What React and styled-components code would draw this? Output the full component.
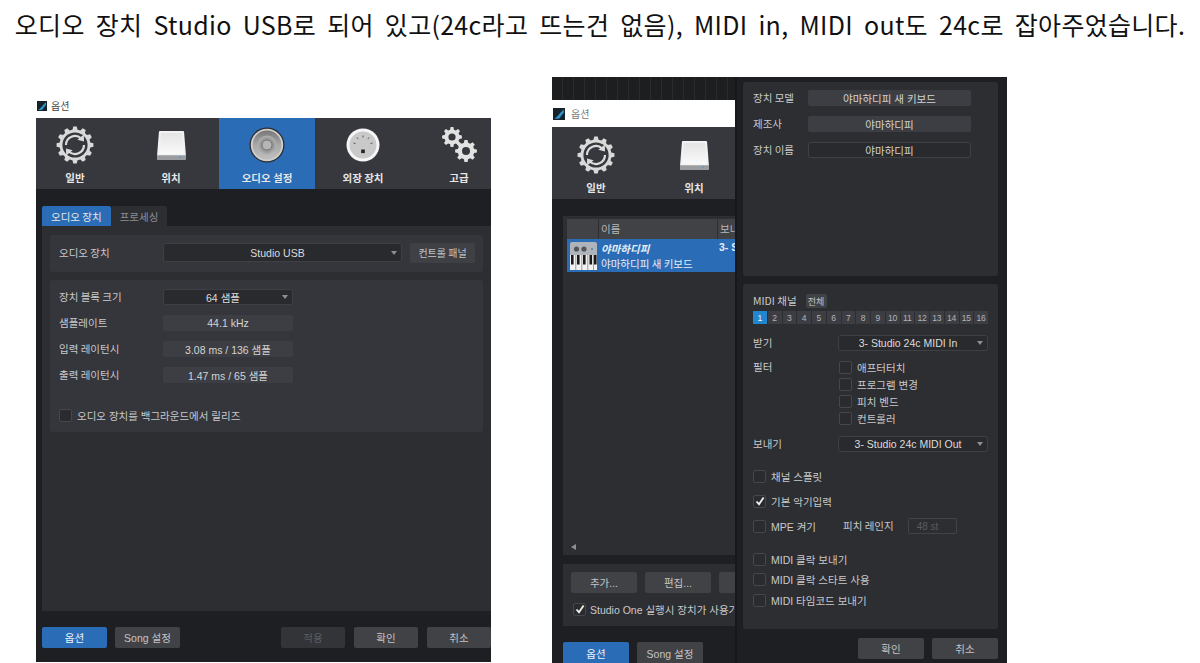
import React from 'react';
import styled, { createGlobalStyle } from 'styled-components';

const FONT = `"Noto Sans CJK KR", "Liberation Sans", sans-serif`;
const UI_FONT = `"Liberation Sans", "Noto Sans CJK KR", sans-serif`;

const GlobalStyle = createGlobalStyle`
    html, body {
        margin: 0;
        padding: 0;
        background: #fff;
        overflow: hidden;
    }
    * {
        box-sizing: border-box;
    }
`;

// makes a cog outline, used by the nav icons
const gearPath = (cx, cy, outer, inner, teeth) => {
    const step = (Math.PI * 2) / teeth;
    let d = '';
    for (let i = 0; i < teeth; i++) {
        const a = i * step - Math.PI / 2;
        const pts = [
            [inner, a - step * 0.32],
            [outer, a - step * 0.18],
            [outer, a + step * 0.18],
            [inner, a + step * 0.32],
        ];
        pts.forEach(([r, t], j) => {
            const x = (cx + r * Math.cos(t)).toFixed(2);
            const y = (cy + r * Math.sin(t)).toFixed(2);
            d += `${i === 0 && j === 0 ? 'M' : 'L'}${x} ${y} `;
        });
    }
    return d + 'Z';
};

const GeneralIcon = () => (
    <svg width="38" height="38" viewBox="0 0 38 38">
        <path d={gearPath(19, 19, 18.5, 15.5, 12)} fill="#d9d9d9" />
        <circle cx="19" cy="19" r="12.6" fill="#36383d" />
        <path d="M10 19a9 9 0 0 1 15.2-6.5" fill="none" stroke="#dcdcdc" strokeWidth="2.2" />
        <path d="M28 19a9 9 0 0 1-15.2 6.5" fill="none" stroke="#dcdcdc" strokeWidth="2.2" />
        <path d="M27.8 8.6l.2 7-6.6-1.8z" fill="#dcdcdc" />
        <path d="M10.2 29.4l-.2-7 6.6 1.8z" fill="#dcdcdc" />
    </svg>
);

const DriveIcon = () => (
    <svg width="29" height="31" viewBox="0 0 30 32">
        <defs>
            <linearGradient id="driveTop" x1="0" y1="0" x2="0" y2="1">
                <stop offset="0" stopColor="#e4e4e4" />
                <stop offset="1" stopColor="#fafafa" />
            </linearGradient>
        </defs>
        <path d="M3 1h24a1 1 0 0 1 1 1l2 25v2a2 2 0 0 1-2 2H2a2 2 0 0 1-2-2v-2L2 2a1 1 0 0 1 1-1z" fill="#f2f2f2" />
        <path d="M4 3h22l1.5 22H2.5z" fill="url(#driveTop)" />
        <path d="M0 26h30v3a2 2 0 0 1-2 2H2a2 2 0 0 1-2-2z" fill="#9a9ca0" />
        <circle cx="24" cy="28" r="0.9" fill="#4f9bd6" />
    </svg>
);

const SpeakerIcon = () => (
    <svg width="36" height="36" viewBox="0 0 36 36">
        <defs>
            <linearGradient id="cone" x1="0" y1="0" x2="0" y2="1">
                <stop offset="0" stopColor="#787878" />
                <stop offset="0.5" stopColor="#a8a8a8" />
                <stop offset="1" stopColor="#c0c0c0" />
            </linearGradient>
            <radialGradient id="capRing" cx="0.5" cy="0.5" r="0.5">
                <stop offset="0.55" stopColor="#8f8f8f" />
                <stop offset="1" stopColor="#b2b2b2" />
            </radialGradient>
        </defs>
        <circle cx="18" cy="18" r="17.5" fill="#2b2c2e" />
        <circle cx="18" cy="18" r="16.2" fill="#cfcfcf" />
        <circle cx="18" cy="18" r="14.4" fill="url(#cone)" />
        <circle cx="18" cy="18" r="9.5" fill="url(#capRing)" />
        <circle cx="18" cy="18" r="5" fill="#b6b6b6" stroke="#777" strokeWidth="1" />
    </svg>
);

const DialIcon = () => (
    <svg width="34" height="34" viewBox="0 0 34 34">
        <circle cx="17" cy="17" r="16.5" fill="#f6f6f6" />
        <circle cx="17" cy="17" r="13.5" fill="#c9c9c9" />
        <g stroke="#555" strokeWidth="1">
            <path d="M7.5 15l2 .6" />
            <path d="M11 9.5l1.2 1.6" />
            <path d="M17 7.5v2" />
            <path d="M23 9.5l-1.2 1.6" />
            <path d="M26.5 15l-2 .6" />
        </g>
        <rect x="15.2" y="21.5" width="3.6" height="3.6" fill="#222" />
    </svg>
);

const AdvancedIcon = () => (
    <svg width="36" height="36" viewBox="0 0 36 36">
        <path d={gearPath(11, 10, 10, 7.6, 8)} fill="#e2e2e2" />
        <circle cx="11" cy="10" r="3.6" fill="#36383d" />
        <path d={gearPath(25, 24, 11, 8.4, 8)} fill="#e2e2e2" />
        <circle cx="25" cy="24" r="4" fill="#36383d" />
    </svg>
);

const KeyboardIcon = () => (
    <svg width="27" height="28" viewBox="0 0 27 28" style={{ flexShrink: 0 }}>
        <rect width="27" height="28" rx="2" fill="#aeb4ba" />
        <circle cx="6.5" cy="7" r="2.6" fill="#555" />
        <circle cx="14" cy="7" r="2.6" fill="#555" />
        <circle cx="22" cy="7" r="1" fill="#4c7fb0" />
        <rect y="13" width="27" height="15" fill="#f2f2f2" />
        {[1, 7, 13, 19.5, 24].map(x => (
            <rect key={x} x={x} y="13" width="2.6" height="9.5" fill="#1a1a1a" />
        ))}
        {[5.5, 11.5, 17.5, 23].map(x => (
            <rect key={x} x={x} y="13" width="0.7" height="15" fill="#777" />
        ))}
    </svg>
);

const LogoIcon = ({ size = 10 }) => (
    <svg width={size} height={size} viewBox="0 0 10 10" style={{ flexShrink: 0 }}>
        <rect width="10" height="10" fill="#15222c" />
        <path d="M1 9C3 8 5 5 9 1v3C7 6 6 8 5 9z" fill="#2f93c4" />
    </svg>
);

const CheckMark = () => (
    <svg width="10" height="10" viewBox="0 0 10 10">
        <path d="M1.5 5.5L4 8.2 8.6 1.6" fill="none" stroke="#f0f0f0" strokeWidth="1.8" />
    </svg>
);

const NAV_ITEMS = [
    { label: '일반', Icon: GeneralIcon },
    { label: '위치', Icon: DriveIcon },
    { label: '오디오 설정', Icon: SpeakerIcon, active: true },
    { label: '외장 장치', Icon: DialIcon },
    { label: '고급', Icon: AdvancedIcon },
];

const CHANNELS = Array.from({ length: 16 }, (_, i) => i + 1);

const NavBar = ({ items, itemWidth, offset, height, iconTop }) => (
    <Nav $offset={offset} $height={height}>
        {items.map(({ label, Icon, active }) => (
            <NavItem key={label} $width={itemWidth} $active={active} $top={iconTop}>
                <NavIcon>
                    <Icon />
                </NavIcon>
                <NavLabel>{label}</NavLabel>
            </NavItem>
        ))}
    </Nav>
);

const Check = ({ checked, children }) => (
    <CheckRow>
        <Box>{checked && <CheckMark />}</Box>
        {children && <span>{children}</span>}
    </CheckRow>
);

const App = () => {
    return (
        <Page>
            <GlobalStyle />
            <Caption>오디오 장치 Studio USB로 되어 있고(24c라고 뜨는건 없음), MIDI in, MIDI out도 24c로 잡아주었습니다.</Caption>
            <Shots>
                <LeftWindow>
                    <TitleBar $height={21} $drop={4} $gap={4}>
                        <LogoIcon />
                        <span>옵션</span>
                    </TitleBar>
                    <NavBar items={NAV_ITEMS} itemWidth={96} offset={-9} height={71} iconTop={8} />
                    <Body>
                        <Tabs>
                            <Tab $active>오디오 장치</Tab>
                            <Tab>프로세싱</Tab>
                        </Tabs>
                        <AudioPanel>
                            <DevicePanel>
                                <FormLabel>오디오 장치</FormLabel>
                                <Select $width={239} $height={19}>Studio USB</Select>
                                <PanelButton>컨트롤 패널</PanelButton>
                            </DevicePanel>
                            <SettingsPanel>
                                <SettingRow>
                                    <FormLabel>장치 블록 크기</FormLabel>
                                    <Select $width={130} $height={16}>64 샘플</Select>
                                </SettingRow>
                                <SettingRow>
                                    <FormLabel>샘플레이트</FormLabel>
                                    <ReadOnly $width={130}>44.1 kHz</ReadOnly>
                                </SettingRow>
                                <SettingRow>
                                    <FormLabel>입력 레이턴시</FormLabel>
                                    <ReadOnly $width={130}>3.08 ms / 136 샘플</ReadOnly>
                                </SettingRow>
                                <SettingRow>
                                    <FormLabel>출력 레이턴시</FormLabel>
                                    <ReadOnly $width={130}>1.47 ms / 65 샘플</ReadOnly>
                                </SettingRow>
                                <ReleaseRow>
                                    <Check>오디오 장치를 백그라운드에서 릴리즈</Check>
                                </ReleaseRow>
                            </SettingsPanel>
                        </AudioPanel>
                    </Body>
                    <Footer>
                        <FooterGroup>
                            <Button $primary>옵션</Button>
                            <Button>Song 설정</Button>
                        </FooterGroup>
                        <FooterGroup $gap={9}>
                            <Button $disabled $width={64}>적용</Button>
                            <Button $width={64}>확인</Button>
                            <Button $width={64}>취소</Button>
                        </FooterGroup>
                    </Footer>
                </LeftWindow>

                <RightShot>
                    <BaseWindow>
                        <DawStrip />
                        <TitleBar $height={27} $gap={6} $muted>
                            <LogoIcon size={12} />
                            <span>옵션</span>
                        </TitleBar>
                        <NavBar items={NAV_ITEMS.slice(0, 2)} itemWidth={98} offset={-5} height={72} iconTop={9} />
                        <BaseBody>
                            <DeviceList>
                                <ListHeader>
                                    <HeaderCell $width={32} />
                                    <HeaderCell $width={119}>이름</HeaderCell>
                                    <HeaderCell $width={30}>보내</HeaderCell>
                                </ListHeader>
                                <ListRow>
                                    <KeyboardIcon />
                                    <RowNames>
                                        <DeviceName>야마하디피</DeviceName>
                                        <span>야마하디피 새 키보드</span>
                                    </RowNames>
                                    <RowSend>3- S</RowSend>
                                </ListRow>
                                <ScrollArrow />
                            </DeviceList>
                            <ListActions>
                                <ActionRow>
                                    <Button $width={66}>추가...</Button>
                                    <Button $width={66}>편집...</Button>
                                    <Button $width={66} />
                                </ActionRow>
                                <Check checked>Studio One 실행시 장치가 사용가능한지 확인</Check>
                            </ListActions>
                            <BaseFooter>
                                <Button $primary $width={66} $height={23}>옵션</Button>
                                <Button $width={66} $height={23}>Song 설정</Button>
                            </BaseFooter>
                        </BaseBody>
                    </BaseWindow>

                    <DeviceDialog>
                        <ModelPanel>
                            <ModelRow>
                                <FormLabel>장치 모델</FormLabel>
                                <ReadOnly $width={163}>야마하디피 새 키보드</ReadOnly>
                            </ModelRow>
                            <ModelRow>
                                <FormLabel>제조사</FormLabel>
                                <ReadOnly $width={163}>야마하디피</ReadOnly>
                            </ModelRow>
                            <ModelRow>
                                <FormLabel>장치 이름</FormLabel>
                                <TextField>야마하디피</TextField>
                            </ModelRow>
                        </ModelPanel>
                        <MidiPanel>
                            <ChannelHeader>
                                <FormLabel>MIDI 채널</FormLabel>
                                <AllButton>전체</AllButton>
                            </ChannelHeader>
                            <Channels>
                                {CHANNELS.map(n => (
                                    <Channel key={n} $active={n === 1}>{n}</Channel>
                                ))}
                            </Channels>
                            <PortRow>
                                <FormLabel>받기</FormLabel>
                                <Select $width={150} $height={16}>3- Studio 24c MIDI In</Select>
                            </PortRow>
                            <FilterRow>
                                <FormLabel>필터</FormLabel>
                                <FilterList>
                                    <Check>애프터터치</Check>
                                    <Check>프로그램 변경</Check>
                                    <Check>피치 벤드</Check>
                                    <Check>컨트롤러</Check>
                                </FilterList>
                            </FilterRow>
                            <PortRow>
                                <FormLabel>보내기</FormLabel>
                                <Select $width={150} $height={16}>3- Studio 24c MIDI Out</Select>
                            </PortRow>
                            <OptionList>
                                <Check>채널 스플릿</Check>
                                <Check checked>기본 악기입력</Check>
                                <MpeRow>
                                    <MpeCheck><Check>MPE 켜기</Check></MpeCheck>
                                    <FormLabel>피치 레인지</FormLabel>
                                    <RangeField>48 st</RangeField>
                                </MpeRow>
                            </OptionList>
                            <ClockList>
                                <Check>MIDI 클락 보내기</Check>
                                <Check>MIDI 클락 스타트 사용</Check>
                                <Check>MIDI 타임코드 보내기</Check>
                            </ClockList>
                        </MidiPanel>
                        <DialogFooter>
                            <Button $width={66}>확인</Button>
                            <Button $width={66}>취소</Button>
                        </DialogFooter>
                    </DeviceDialog>
                </RightShot>
            </Shots>
        </Page>
    );
};

const Page = styled.div`
    width: 1200px;
    height: 663px;
    overflow: hidden;
    background: #fff;
    font-family: ${FONT};
`;

const Caption = styled.div`
    height: 50px;
    line-height: 48px;
    text-align: center;
    font-size: 25px;
    letter-spacing: 0.3px;
    word-spacing: 5.2px;
    color: #111;
    white-space: nowrap;
`;

const Shots = styled.div`
    display: flex;
    align-items: flex-start;
    gap: 61px;
    padding: 27px 0 0 36px;
`;

const LeftWindow = styled.div`
    width: 455px;
    height: 565px;
    margin-top: 20px;
    display: flex;
    flex-direction: column;
    overflow: hidden;
    flex-shrink: 0;
    background: #1e1f22;
`;

const TitleBar = styled.div`
    height: ${p => p.$height}px;
    flex-shrink: 0;
    display: flex;
    align-items: center;
    gap: ${p => p.$gap}px;
    padding: 0 0 ${p => p.$drop || 0}px 1px;
    background: #fff;
    color: ${p => (p.$muted ? '#777' : '#444')};
    font-size: 10px;
`;

const Nav = styled.div`
    height: ${p => p.$height}px;
    flex-shrink: 0;
    display: flex;
    margin-left: ${p => p.$offset}px;
    background: #36383d;
`;

const NavItem = styled.div`
    width: ${p => p.$width}px;
    flex-shrink: 0;
    display: flex;
    flex-direction: column;
    align-items: center;
    padding-top: ${p => p.$top}px;
    background: ${p => (p.$active ? '#2a6cb6' : 'transparent')};
`;

const NavIcon = styled.div`
    height: 38px;
    display: flex;
    align-items: center;
    justify-content: center;
`;

const NavLabel = styled.div`
    margin-top: 7px;
    font-size: 10.5px;
    line-height: 14px;
    font-weight: 700;
    color: #e6e6e6;
    white-space: nowrap;
`;

const Body = styled.div`
    padding: 17px 0 0 6px;
`;

const Tabs = styled.div`
    height: 20px;
    display: flex;
`;

const Tab = styled.div`
    padding: 0 9px;
    display: flex;
    align-items: center;
    font-size: 10.5px;
    border-radius: 2px 2px 0 0;
    color: ${p => (p.$active ? '#e8e8e8' : '#8d8f93')};
    background: ${p => (p.$active ? '#2a6cb6' : '#2d2e32')};
`;

const AudioPanel = styled.div`
    height: 385px;
    padding: 9px 8px;
    background: #2d2e32;
`;

const Panel = styled.div`
    background: #35363b;
    border-radius: 3px;
`;

const DevicePanel = styled(Panel)`
    height: 37px;
    display: flex;
    align-items: center;
    padding: 0 8px 2px 9px;
`;

const FormLabel = styled.div`
    flex-shrink: 0;
    font-size: 10.5px;
    line-height: 14px;
    color: #c9c9cb;
    white-space: nowrap;
`;

const Select = styled.div`
    position: relative;
    width: ${p => p.$width}px;
    height: ${p => p.$height}px;
    flex-shrink: 0;
    margin-left: auto;
    display: flex;
    align-items: center;
    justify-content: center;
    padding-right: 10px;
    font-family: ${UI_FONT};
    font-size: 10.5px;
    color: #dcdcdc;
    white-space: nowrap;
    background: #292a2d;
    border: 1px solid #3f4044;
    border-radius: 3px;

    &::after {
        content: '';
        position: absolute;
        right: 4px;
        top: 50%;
        margin-top: -2px;
        border-left: 3.5px solid transparent;
        border-right: 3.5px solid transparent;
        border-top: 4px solid #8d8f93;
    }
`;

const PanelButton = styled.div`
    width: 65px;
    height: 20px;
    margin-left: 8px;
    flex-shrink: 0;
    display: flex;
    align-items: center;
    justify-content: center;
    font-size: 10px;
    color: #c4c4c6;
    background: #3f4044;
    border-radius: 2px;
`;

const SettingsPanel = styled(Panel)`
    height: 152px;
    margin-top: 8px;
    padding: 9px 9px 0;
    display: flex;
    flex-direction: column;
    gap: 10px;
`;

const SettingRow = styled.div`
    height: 16px;
    display: flex;
    align-items: center;

    ${FormLabel} {
        width: 104px;
    }

    > :last-child {
        margin-left: 0;
    }
`;

const ReadOnly = styled.div`
    width: ${p => p.$width}px;
    height: 16px;
    flex-shrink: 0;
    display: flex;
    align-items: center;
    justify-content: center;
    font-family: ${UI_FONT};
    font-size: 10.5px;
    color: #d4d4d4;
    white-space: nowrap;
    background: #3d3e43;
    border-radius: 2px;
`;

const ReleaseRow = styled.div`
    margin-top: 15px;
`;

const CheckRow = styled.div`
    display: flex;
    align-items: center;
    gap: 5px;
    height: 14px;
    font-family: ${UI_FONT};
    font-size: 10.5px;
    color: #c9c9cb;
    white-space: nowrap;
`;

const Box = styled.div`
    width: 13px;
    height: 13px;
    flex-shrink: 0;
    display: flex;
    align-items: center;
    justify-content: center;
    background: #2a2b2e;
    border: 1px solid #46474b;
    border-radius: 2px;
`;

const Footer = styled.div`
    display: flex;
    justify-content: space-between;
    padding: 16px 0 0 6px;
`;

const FooterGroup = styled.div`
    display: flex;
    gap: ${p => p.$gap || 8}px;
`;

const Button = styled.div`
    width: ${p => p.$width || 65}px;
    height: ${p => p.$height || 21}px;
    flex-shrink: 0;
    display: flex;
    align-items: center;
    justify-content: center;
    font-family: ${UI_FONT};
    font-size: 10.5px;
    white-space: nowrap;
    border-radius: 2px;
    color: ${p => (p.$primary ? '#eef3f8' : p.$disabled ? '#5d5e61' : '#c4c4c6')};
    background: ${p => (p.$primary ? '#2a6cb6' : p.$disabled ? '#333437' : '#414246')};
`;

const RightShot = styled.div`
    display: flex;
    flex-shrink: 0;
    width: 455px;
    height: 586px;
    overflow: hidden;
`;

const BaseWindow = styled.div`
    width: 183px;
    flex-shrink: 0;
    display: flex;
    flex-direction: column;
    background: #1e1f22;
    overflow: hidden;
`;

const DawStrip = styled.div`
    height: 23px;
    flex-shrink: 0;
    background: repeating-linear-gradient(90deg, #1d1e20 0, #1d1e20 10px, #2a2b2d 10px, #2a2b2d 11px);
`;

const BaseBody = styled.div`
    padding: 17px 0 0 11px;
`;

const DeviceList = styled.div`
    position: relative;
    height: 339px;
    width: 172px;
    padding: 3px 0 0 4px;
    background: #2d2e32;
`;

const ListHeader = styled.div`
    display: flex;
    height: 20px;
    background: #414246;
`;

const HeaderCell = styled.div`
    width: ${p => p.$width}px;
    flex-shrink: 0;
    padding-left: 2px;
    font-size: 10.5px;
    line-height: 20px;
    color: #b8b8ba;
    overflow: hidden;
    white-space: nowrap;
    border-right: 1px solid #2d2e32;
`;

const ListRow = styled.div`
    height: 33px;
    display: flex;
    align-items: center;
    padding-left: 3px;
    gap: 4px;
    font-size: 10.5px;
    color: #e6edf5;
    background: #2a6cb6;
    overflow: hidden;
    white-space: nowrap;
`;

const RowNames = styled.div`
    width: 114px;
    flex-shrink: 0;
    display: flex;
    flex-direction: column;
    line-height: 15px;
`;

const DeviceName = styled.span`
    font-weight: 700;
    font-style: italic;
`;

const RowSend = styled.div`
    align-self: flex-start;
    padding-top: 2px;
    font-family: ${UI_FONT};
    font-weight: 700;
`;

// scroll arrow sits on top of the empty list area
const ScrollArrow = styled.div`
    position: absolute;
    left: 8px;
    bottom: 5px;
    border-top: 3.5px solid transparent;
    border-bottom: 3.5px solid transparent;
    border-right: 5px solid #8d8f93;
`;

const ListActions = styled.div`
    width: 172px;
    height: 62px;
    margin-top: 9px;
    padding: 8px 0 0 8px;
    background: #2d2e32;
    overflow: hidden;

    ${CheckRow} {
        margin-top: 9px;
        padding-left: 2px;
        gap: 4px;
    }
`;

const ActionRow = styled.div`
    display: flex;
    gap: 8px;
`;

const BaseFooter = styled.div`
    display: flex;
    gap: 8px;
    margin-top: 16px;
`;

const DeviceDialog = styled.div`
    width: 272px;
    flex-shrink: 0;
    padding: 5px 9px 0 8px;
    background: #1e1f22;
    border-left: 2px solid #17181a;
`;

const ModelPanel = styled(Panel)`
    margin-left: -2px;
    width: 255px;
    height: 194px;
    padding: 8px 0 0 10px;
    background: #2d2e32;
`;

const ModelRow = styled.div`
    height: 16px;
    display: flex;
    align-items: center;
    margin-bottom: 10px;

    ${FormLabel} {
        width: 55px;
    }
`;

const TextField = styled.div`
    width: 163px;
    height: 16px;
    display: flex;
    align-items: center;
    justify-content: center;
    font-size: 10.5px;
    color: #d4d4d4;
    background: #292a2d;
    border: 1px solid #3f4044;
    border-radius: 2px;
`;

const MidiPanel = styled(Panel)`
    margin: 8px 0 0 -2px;
    width: 255px;
    height: 345px;
    padding: 10px 10px 0;
    background: #2d2e32;
`;

const ChannelHeader = styled.div`
    height: 14px;
    display: flex;
    align-items: center;
    gap: 9px;
`;

const AllButton = styled.div`
    width: 21px;
    height: 14px;
    display: flex;
    align-items: center;
    justify-content: center;
    font-size: 9px;
    color: #c4c4c6;
    background: #414246;
    border-radius: 2px;
`;

const Channels = styled.div`
    display: grid;
    grid-template-columns: repeat(16, 1fr);
    gap: 1px;
    margin-top: 3px;
    height: 13px;
`;

const Channel = styled.div`
    display: flex;
    align-items: center;
    justify-content: center;
    font-family: ${UI_FONT};
    font-size: 8.5px;
    color: ${p => (p.$active ? '#f0f6fb' : '#b4b4b6')};
    background: ${p => (p.$active ? '#2286cf' : '#3d3e43')};
`;

const PortRow = styled.div`
    height: 16px;
    display: flex;
    align-items: center;
    margin-top: 11px;
`;

const FilterRow = styled.div`
    display: flex;
    margin-top: 9px;
    height: 65px;
`;

const FilterList = styled.div`
    margin-left: auto;
    width: 150px;
    padding-left: 1px;
    display: flex;
    flex-direction: column;
    gap: 3.3px;
`;

const OptionList = styled.div`
    margin-top: 17px;
    display: flex;
    flex-direction: column;
    gap: 11px;
`;

const MpeRow = styled.div`
    display: flex;
    align-items: center;
    height: 14px;
`;

const MpeCheck = styled.div`
    width: 90px;
`;

const RangeField = styled.div`
    width: 49px;
    height: 16px;
    margin-left: 14px;
    padding-left: 8px;
    display: flex;
    align-items: center;
    font-family: ${UI_FONT};
    font-size: 10px;
    color: #5a5b5e;
    border: 1px solid #424347;
    border-radius: 2px;
`;

const ClockList = styled.div`
    margin-top: 19px;
    display: flex;
    flex-direction: column;
    gap: 6.5px;
`;

const DialogFooter = styled.div`
    display: flex;
    justify-content: flex-end;
    gap: 8px;
    margin: 9px 0 0 0;
`;

export default App;
